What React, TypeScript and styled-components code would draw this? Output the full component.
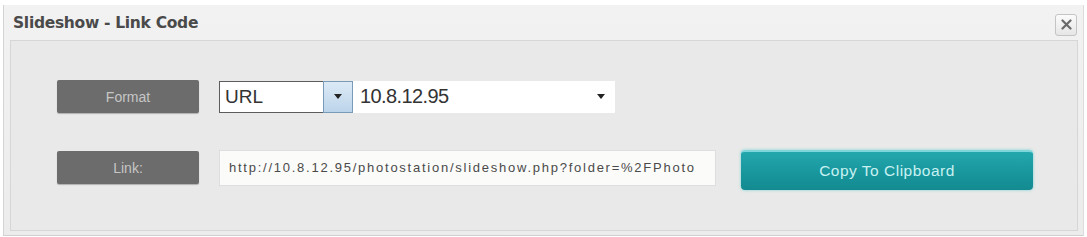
import React from "react";
import styled, { createGlobalStyle } from "styled-components";

const GlobalStyle = createGlobalStyle`
  html, body {
    margin: 0;
    padding: 0;
    background: #ffffff;
  }
  body {
    font-family: "Liberation Sans", Arial, sans-serif;
  }
`;

const Page = styled.div`
  width: 1087px;
  height: 237px;
  padding-top: 5px;
  box-sizing: border-box;
  background: #ffffff;
`;
const Window = styled.div`
  margin: 0 3px;
  height: 231px;
  border-left: 1px solid #d4d4d4;
  border-right: 1px solid #dcdcdc;
  border-bottom: 1px solid #d0d0d0;
  background: linear-gradient(#f2f2f2, #ececec);
  display: flex;
  flex-direction: column;
  box-sizing: border-box;
`;
const TitleBar = styled.div`
  height: 35px;
  display: flex;
  align-items: center;
  justify-content: space-between;
  padding: 0 6px 0 9px;
`;
const Title = styled.div`
  font-family: "DejaVu Sans", Verdana, sans-serif;
  font-weight: bold;
  font-size: 15.5px;
  color: #4a4a4a;
  letter-spacing: -0.3px;
`;
const CloseButton = styled.div`
  width: 20px;
  height: 20px;
  border: 1px solid #c4c4c4;
  border-radius: 3px;
  background: linear-gradient(#fbfbfb, #e6e6e6);
  display: flex;
  align-items: center;
  justify-content: center;
  margin-top: 4px;
`;
const Panel = styled.div`
  flex: 1;
  margin: 0 5px 4px 6px;
  border: 1px solid #d6d6d6;
  background: #e8e9e8;
  padding: 39px 0 0 46px;
  display: flex;
  flex-direction: column;
  gap: 32px;
`;
const Row = styled.div`
  display: flex;
  align-items: center;
`;
const Label = styled.div`
  width: 142px;
  height: 33px;
  background: #6c6c6c;
  border-radius: 2px;
  box-shadow: 0 1px 1px rgba(0, 0, 0, 0.25);
  color: #c6c6c6;
  font-size: 14px;
  display: flex;
  align-items: center;
  justify-content: center;
  margin-right: 20px;
`;
const SelectBox = styled.div`
  display: flex;
  align-items: stretch;
  height: 32px;
  background: #ffffff;
`;
const FormatValue = styled.div`
  width: 104px;
  border: 1px solid #5c5c5c;
  border-right: none;
  font-size: 19px;
  color: #333;
  display: flex;
  align-items: center;
  padding-left: 5px;
  box-sizing: border-box;
`;
const ArrowButton = styled.div`
  width: 28px;
  border: 1px solid #7a9bb8;
  background: linear-gradient(#dceaf6, #bcd4ea);
  display: flex;
  align-items: center;
  justify-content: center;
`;
const HostSelect = styled.div`
  width: 262px;
  display: flex;
  align-items: center;
  justify-content: space-between;
  padding: 0 10px 0 7px;
  box-sizing: border-box;
  font-size: 20px;
  color: #333;
  letter-spacing: -0.6px;
`;
const Caret = styled.span`
  width: 0;
  height: 0;
  border-left: 4px solid transparent;
  border-right: 4px solid transparent;
  border-top: 5px solid #222;
`;
const LinkField = styled.div`
  width: 497px;
  height: 36px;
  background: #fbfbf9;
  border: 1px solid #dedede;
  box-sizing: border-box;
  display: flex;
  align-items: center;
  padding-left: 9px;
  font-size: 13px;
  letter-spacing: 1.75px;
  color: #4a4a4a;
  white-space: nowrap;
  overflow: hidden;
  margin-right: 25px;
`;
const CopyButton = styled.div`
  width: 292px;
  height: 40px;
  border-radius: 4px;
  background: linear-gradient(#23a7ad, #17959b 60%, #138a90);
  border-top: 2px solid #7fd6da;
  box-shadow: 0 0 3px rgba(80, 200, 210, 0.7);
  box-sizing: border-box;
  color: #c9f1f2;
  font-size: 15.5px;
  letter-spacing: 0.5px;
  display: flex;
  align-items: center;
  justify-content: center;
  margin-top: 5px;
`;

export default function App() {
  return (
    <>
      <GlobalStyle />
      <Page>
        <Window>
          <TitleBar>
            <Title>Slideshow - Link Code</Title>
            <CloseButton>
              <svg width="11" height="11" viewBox="0 0 11 11">
                <path d="M1.5 1.5 L9.5 9.5 M9.5 1.5 L1.5 9.5" stroke="#6a6a6a" strokeWidth="2.2" strokeLinecap="round" />
              </svg>
            </CloseButton>
          </TitleBar>
          <Panel>
            <Row>
              <Label>Format</Label>
              <SelectBox>
                <FormatValue>URL</FormatValue>
                <ArrowButton>
                  <Caret />
                </ArrowButton>
                <HostSelect>
                  10.8.12.95
                  <Caret />
                </HostSelect>
              </SelectBox>
            </Row>
            <Row>
              <Label>Link:</Label>
              <LinkField>http://10.8.12.95/photostation/slideshow.php?folder=%2FPhoto</LinkField>
              <CopyButton>Copy To Clipboard</CopyButton>
            </Row>
          </Panel>
        </Window>
      </Page>
    </>
  );
}
